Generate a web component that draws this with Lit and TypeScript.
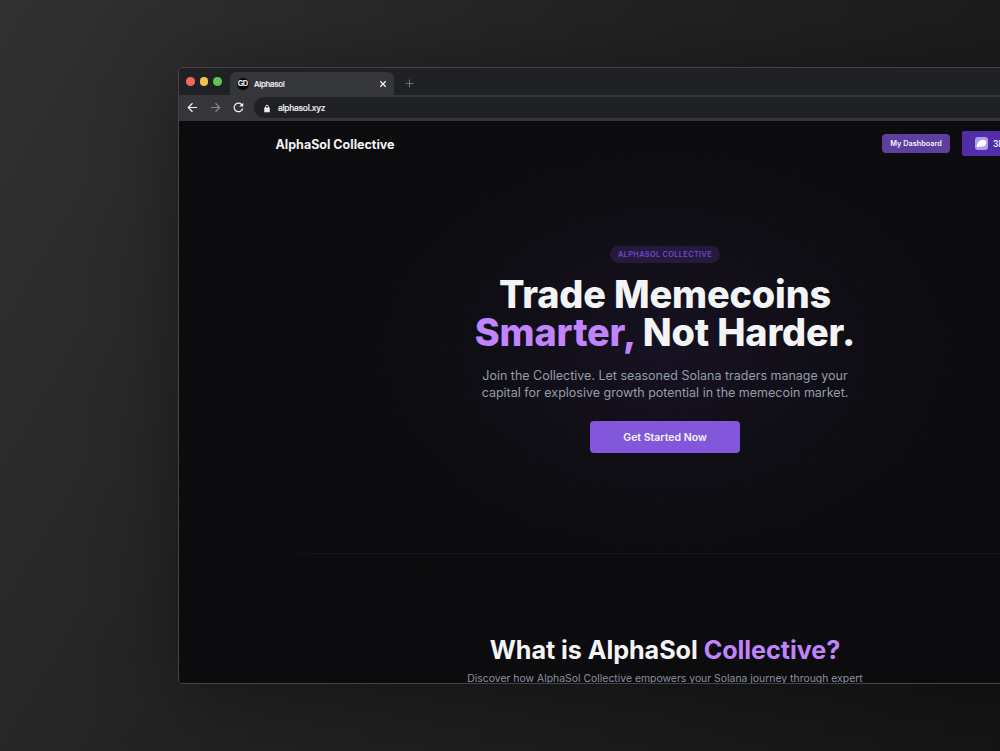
import { css, html, LitElement, svg } from "lit";
import { customElement, property } from "lit/decorators.js";

const icons = {
  back: svg`<path d="M14.7 8H2.4M8 1.8 1.9 8 8 14.2" />`,
  forward: svg`<path d="M1.3 8h12.3M8 1.8 14.1 8 8 14.2" />`,
  reload: svg`<path d="M14 9.2A6.2 6.2 0 1 1 12.4 3.6l1.6 1.6" /><path d="M14.9 1v5.7H9.2z" fill="currentColor" stroke="none" />`,
  close: svg`<path d="M2.5 2.5l11 11M13.5 2.5l-11 11" stroke-width="2.6" />`,
  plus: svg`<path d="M8 1v14M1 8h14" />`,
  lock: svg`<path d="M2.5 6h11v9.5h-11z" fill="currentColor" stroke="none" /><path d="M5.2 7V4.2a2.8 2.8 0 0 1 5.6 0V7" />`,
};

@customElement("ui-icon")
class UiIcon extends LitElement {
  @property({ type: String })
  name: keyof typeof icons;

  static styles = css`
    :host {
      display: block;
      width: 11px;
      height: 11px;
      flex: none;
    }
    svg {
      display: block;
      width: 100%;
      height: 100%;
      fill: none;
      stroke: currentColor;
      stroke-width: 1.8;
    }
  `;

  render() {
    return html`<svg viewBox="0 0 16 16">${icons[this.name]}</svg>`;
  }
}

@customElement("browser-chrome")
class BrowserChrome extends LitElement {
  static styles = css`
    :host {
      display: block;
      color: #f1f1f2;
      font-size: 7.9px;
      font-weight: 500;
      letter-spacing: -0.3px;
      -webkit-text-stroke: 0.15px currentColor;
    }
    .tabs {
      display: flex;
      align-items: flex-end;
      height: 27px;
      background: #202124;
    }
    .lights {
      display: flex;
      gap: 5px;
      padding: 0 8px 9px 7px;
    }
    .light {
      width: 8.7px;
      height: 8.7px;
      border-radius: 50%;
    }
    .red {
      background: #ed6a5e;
    }
    .amber {
      background: #f5bf4f;
    }
    .green {
      background: #61c554;
    }
    .tab {
      display: flex;
      align-items: center;
      box-sizing: border-box;
      width: 164px;
      height: 23px;
      padding: 0 7px 0 7px;
      border-radius: 6px 6px 0 0;
      background: #35363a;
    }
    .favicon {
      width: 12px;
      height: 12px;
      line-height: 12px;
      margin-right: 5px;
      border-radius: 50%;
      background: #050505;
      text-align: center;
      font-size: 7.5px;
      font-weight: 600;
      letter-spacing: -0.8px;
      text-indent: -1px;
    }
    .title {
      flex: 1;
    }
    .close {
      width: 8px;
      height: 8px;
    }
    .plus {
      width: 9px;
      height: 9px;
      margin: 0 0 7px 11px;
      color: #707175;
    }
    .toolbar {
      display: flex;
      align-items: center;
      box-sizing: border-box;
      height: 26px;
      padding: 0 0 1px 8px;
      background: #35363a;
    }
    .forward {
      margin: 0 12px;
      color: #85868a;
    }
    .address {
      display: flex;
      align-items: center;
      box-sizing: border-box;
      flex: 1;
      height: 21px;
      margin-left: 10px;
      padding: 1px 0 0 9px;
      border-radius: 11px 0 0 11px;
      background: #202124;
      font-size: 8.4px;
      letter-spacing: -0.25px;
    }
    .lock {
      width: 8px;
      height: 9px;
      margin-right: 7px;
    }
  `;

  render() {
    return html`
      <div class="tabs">
        <div class="lights">
          <div class="light red"></div>
          <div class="light amber"></div>
          <div class="light green"></div>
        </div>
        <div class="tab">
          <div class="favicon">GD</div>
          <div class="title">Alphasol</div>
          <ui-icon class="close" name="close"></ui-icon>
        </div>
        <ui-icon class="plus" name="plus"></ui-icon>
      </div>
      <div class="toolbar">
        <ui-icon name="back"></ui-icon>
        <ui-icon class="forward" name="forward"></ui-icon>
        <ui-icon name="reload"></ui-icon>
        <div class="address">
          <ui-icon class="lock" name="lock"></ui-icon>
          <span>alphasol.xyz</span>
        </div>
      </div>
    `;
  }
}

@customElement("landing-page")
class LandingPage extends LitElement {
  static styles = css`
    :host {
      display: block;
      height: 562px;
      overflow: hidden;
      color: #f3f4f6;
      background:
        radial-gradient(circle, rgba(255, 255, 255, 0.02) 0.9px, transparent 1.5px) -10px -0.5px / 21.9px 21.9px,
        radial-gradient(ellipse 300px 210px at 486px 229px, rgba(91, 52, 160, 0.14), rgba(91, 52, 160, 0.06) 50%, transparent),
        #0c0c0e;
    }
    header {
      display: flex;
      align-items: center;
      justify-content: space-between;
      height: 45px;
      padding: 0 96.5px;
    }
    .brand {
      padding-top: 1px;
      font-size: 12.5px;
      font-weight: 700;
    }
    .actions {
      display: flex;
      align-items: center;
      gap: 12px;
      width: 171px;
      margin-right: 1.5px;
      font-weight: 600;
    }
    .dashboard {
      width: 68px;
      height: 19px;
      line-height: 20px;
      flex: none;
      border-radius: 4px;
      background: #5e3f9e;
      text-align: center;
      font-size: 7.3px;
    }
    .wallet {
      display: flex;
      align-items: center;
      box-sizing: border-box;
      width: 91px;
      height: 25px;
      padding-left: 13px;
      flex: none;
      gap: 5px;
      border-radius: 2px;
      background: #512da8;
      font-size: 8.5px;
    }
    .wallet svg {
      width: 13px;
      height: 13px;
    }
    .hero {
      display: flex;
      flex-direction: column;
      align-items: center;
      box-sizing: border-box;
      height: 387px;
      padding-top: 80px;
      text-align: center;
    }
    .badge {
      height: 17px;
      line-height: 17px;
      padding: 0 8px;
      border-radius: 9px;
      background: #251a3c;
      color: #7447d3;
      font-size: 7.35px;
      font-weight: 600;
      letter-spacing: 0.35px;
    }
    h1 {
      margin: 12px 0 0;
      font-size: 37.8px;
      line-height: 38px;
      font-weight: 800;
      letter-spacing: -0.14px;
    }
    .accent {
      color: #c084fc;
    }
    .lead {
      margin: 16px 0 0;
      font-size: 12.5px;
      line-height: 17px;
      color: #959dab;
    }
    .start {
      width: 150px;
      height: 32px;
      line-height: 33px;
      margin-top: 20px;
      border-radius: 4px;
      background: #8257db;
      font-size: 10.5px;
      font-weight: 600;
    }
    .about {
      margin: 0 97px;
      padding-top: 81px;
      text-align: center;
    }
    .rule {
      height: 1px;
      margin: 0 97px;
      background: linear-gradient(90deg, transparent, #151518 5%, #151518 95%, transparent);
    }
    h2 {
      margin: 0;
      font-size: 25.2px;
      line-height: 31px;
      font-weight: 700;
      letter-spacing: -0.07px;
    }
    .about p {
      margin: 4px 0 0;
      font-size: 10.42px;
      line-height: 17px;
      color: #8b929f;
    }
  `;

  render() {
    return html`
      <header>
        <div class="brand">AlphaSol Collective</div>
        <div class="actions">
          <div class="dashboard">My Dashboard</div>
          <div class="wallet">
            <svg viewBox="0 0 13 13">
              <rect width="13" height="13" rx="3" fill="#ab9ff2" />
              <path
                d="M1.8 9.3C1.8 6 4.6 2.8 8 2.8c2.4 0 3.3 1 3.3 2.6 0 2.4-1.7 4.2-3 4.2-.6 0-.8-.4-.7-.9-.5.7-1.2 1.2-1.9 1.2-.6 0-.9-.3-.8-.8-.5.6-1 1.2-1.8 1.2-.8 0-1.3-.3-1.300-1z"
                fill="#fff"
              />
            </svg>
            <span>3E</span>
          </div>
        </div>
      </header>
      <section class="hero">
        <div class="badge">ALPHASOL COLLECTIVE</div>
        <h1>
          Trade Memecoins<br /><span class="accent">Smarter,</span> Not Harder.
        </h1>
        <p class="lead">
          Join the Collective. Let seasoned Solana traders manage your<br />
          capital for explosive growth potential in the memecoin market.
        </p>
        <div class="start">Get Started Now</div>
      </section>
      <div class="rule"></div>
      <section class="about">
        <h2>What is AlphaSol <span class="accent">Collective?</span></h2>
        <p>Discover how AlphaSol Collective empowers your Solana journey through expert</p>
      </section>
    `;
  }
}

@customElement("app-root")
class AppRoot extends LitElement {
  static styles = css`
    :host {
      display: block;
      box-sizing: border-box;
      width: 100vw;
      height: 751px;
      padding: 67px 0 0 178px;
      overflow: hidden;
      font-family: Inter, "Liberation Sans", sans-serif;
      background: linear-gradient(120deg, #313131 0%, #222222 45%, #151515 100%);
    }
    .window {
      box-sizing: border-box;
      width: 974px;
      height: 617px;
      border: 1px solid #434446;
      border-radius: 5px;
      overflow: hidden;
      box-shadow: 0 10px 80px rgba(0, 0, 0, 0.35);
    }
  `;

  render() {
    return html`
      <div class="window">
        <browser-chrome></browser-chrome>
        <landing-page></landing-page>
      </div>
    `;
  }
}
